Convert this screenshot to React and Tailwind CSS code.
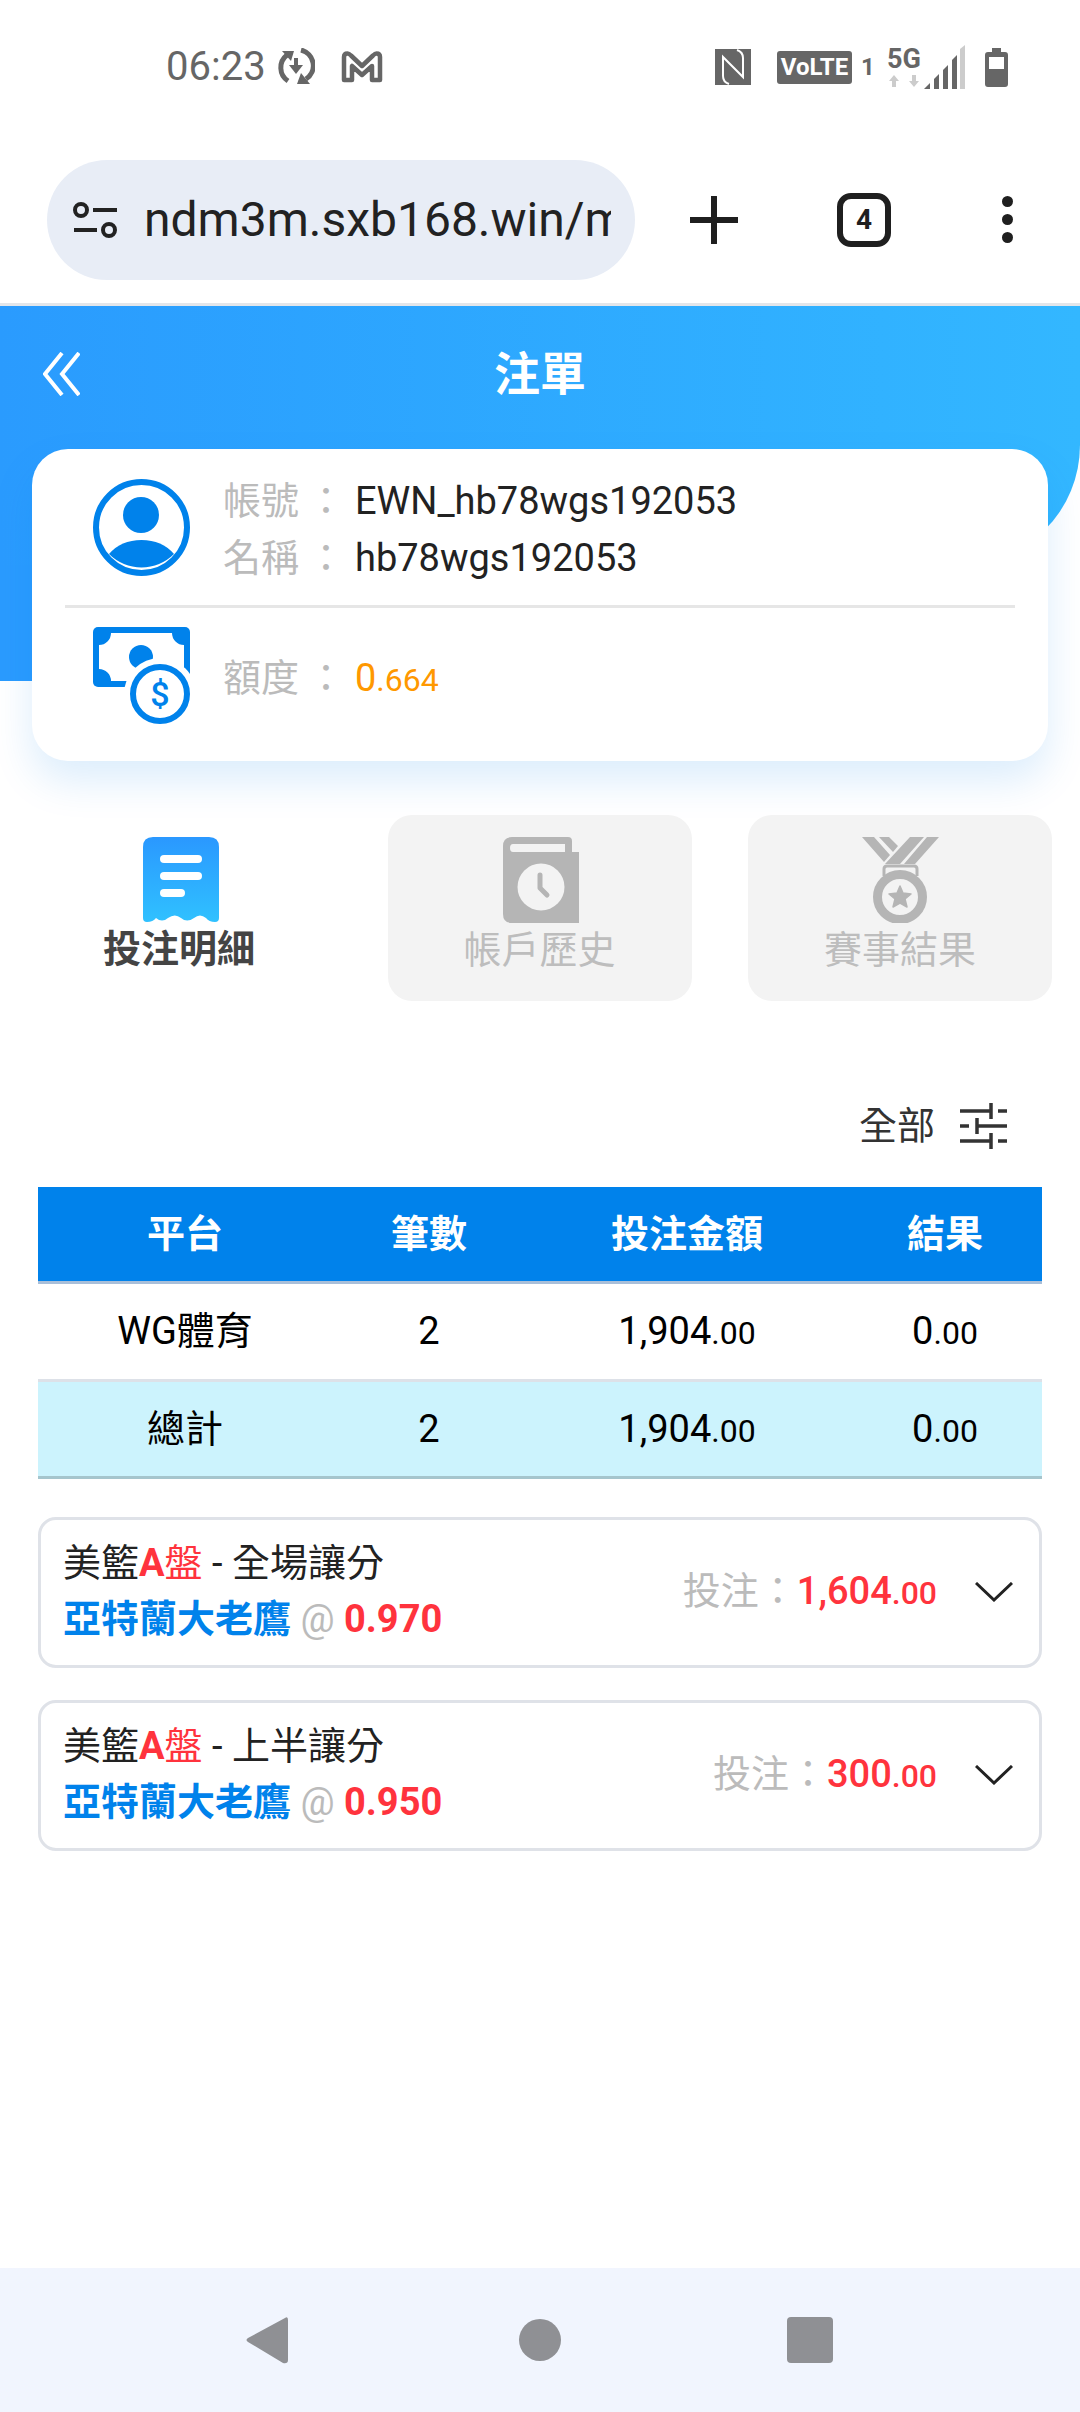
const rows = [
  { name: 'WG體育', count: '2', bet: '1,904', result: '0', cls: 'h-[98px] bg-white border-[#dde1e8]' },
  { name: '總計', count: '2', bet: '1,904', result: '0', cls: 'h-[97px] bg-[#ccf3fd] border-[#a5c5cd]' },
];

const bets = [
  { market: '全場讓分', odds: '0.970', amount: '1,604' },
  { market: '上半讓分', odds: '0.950', amount: '300' },
];

function Money({ value }) {
  return <span>{value}<span className="text-[32px]">.00</span></span>;
}

function SyncIcon() {
  return (
    <svg width="38" height="38" viewBox="0 0 38 38" fill="none" className="ml-[11px]">
      <path d="M10 7 A16 16 0 0 0 11 33" stroke="#666" strokeWidth="5" />
      <path d="M5 3 L17 3 L14 13 Z" fill="#666" />
      <path d="M24 2 A16 16 0 0 1 29 31" stroke="#666" strokeWidth="5" />
      <path d="M33 36 L20 36 L24 25 Z" fill="#666" />
      <path d="M19 10 V19" stroke="#666" strokeWidth="4" />
      <path d="M12 17 H26 L19 26 Z" fill="#666" />
    </svg>
  );
}

function MailIcon() {
  return (
    <svg width="42" height="32" viewBox="0 0 42 32" fill="none" className="ml-[26px]">
      <path d="M3 29 V6 Q3 2.5 6.5 2.5 Q8 2.5 10 4.5 L21 15 L32 4.5 Q34 2.5 35.5 2.5 Q39 2.5 39 6 V29 H31 V15 L21 24 L11 15 V29 Z" stroke="#666" strokeWidth="4.5" strokeLinejoin="round" />
    </svg>
  );
}

function NfcIcon() {
  return (
    <svg width="36" height="36" viewBox="0 0 36 36">
      <rect width="36" height="36" fill="#666" />
      <path d="M14 35 Q8 33 8 27 V8 L27 27 M22 1 Q28 3 28 9 V28 L9 9" stroke="#fff" strokeWidth="2" fill="none" />
    </svg>
  );
}

function ArrowsIcon() {
  return (
    <svg width="30" height="12" viewBox="0 0 30 12" fill="#ccc">
      <path d="M5 0 L10 6 H7 V12 H3 V6 H0 Z" />
      <path d="M25 12 L30 6 H27 V0 H23 V6 H20 Z" />
    </svg>
  );
}

function SignalIcon() {
  return (
    <svg width="41" height="44" viewBox="0 0 41 44" className="ml-1">
      <path d="M0 44 L6 38 V44 Z" fill="#666" />
      <path d="M10 34 L15 29 V44 H10 Z" fill="#666" />
      <path d="M19 25 L24 20 V44 H19 Z" fill="#666" />
      <path d="M28 15 L33 10 V44 H28 Z" fill="#666" />
      <path d="M36 4 L41 0 V44 H36 Z" fill="#ccc" />
    </svg>
  );
}

function BatteryIcon() {
  return (
    <svg width="23" height="39" viewBox="0 0 23 39" className="ml-5">
      <path d="M7 0 H16 V4 H20 Q23 4 23 7 V36 Q23 39 20 39 H3 Q0 39 0 36 V7 Q0 4 3 4 H7 Z" fill="#666" />
      <rect x="4" y="9" width="15" height="12" fill="#fff" />
    </svg>
  );
}

function UserIcon() {
  return (
    <svg width="97" height="97" viewBox="0 0 97 97" className="shrink-0">
      <circle cx="48.5" cy="48.5" r="45.5" fill="none" stroke="#0082eb" strokeWidth="6" />
      <circle cx="48" cy="36" r="18" fill="#0082eb" />
      <path d="M16 75 Q28 61 48.5 61 Q69 61 81 75 A46 46 0 0 1 16 75 Z" fill="#0082eb" />
    </svg>
  );
}

function CashIcon() {
  return (
    <svg width="97" height="97" viewBox="0 0 97 97" className="shrink-0">
      <rect width="97" height="60" rx="5" fill="#0082eb" />
      <path d="M18 6 H79 A12 12 0 0 0 91 18 V42 A12 12 0 0 0 79 54 H18 A12 12 0 0 0 6 42 V18 A12 12 0 0 0 18 6 Z" fill="#fff" />
      <path d="M79 54 H97 V42 L91 42 Z" fill="#0082eb" />
      <circle cx="48" cy="30" r="12" fill="#0082eb" />
      <circle cx="67" cy="67" r="36" fill="#fff" />
      <circle cx="67" cy="67" r="27" fill="#fff" stroke="#0082eb" strokeWidth="6" />
      <text x="67" y="79" textAnchor="middle" fontSize="34" fontWeight="500" fill="#0082eb" fontFamily="Roboto, sans-serif">$</text>
    </svg>
  );
}

function ReceiptIcon() {
  return (
    <svg width="76" height="85" viewBox="0 0 76 85" className="ml-[3px]">
      <defs>
        <linearGradient id="receipt" x1="0" y1="0" x2="0" y2="1">
          <stop offset="0" stopColor="#2a98ff" />
          <stop offset="1" stopColor="#30c1ff" />
        </linearGradient>
      </defs>
      <path d="M10 0 H66 Q76 0 76 10 V81 Q76 85 72 85 Q66 85 63 81 Q57 76 51 81 Q44 86 38 81 Q32 76 25 81 Q19 86 13 81 Q10 85 4 85 Q0 85 0 81 V10 Q0 0 10 0 Z" fill="url(#receipt)" />
      <rect x="17" y="18" width="42" height="8" rx="4" fill="#fff" />
      <rect x="17" y="35" width="42" height="8" rx="4" fill="#fff" />
      <rect x="17" y="52" width="25" height="8" rx="4" fill="#fff" />
    </svg>
  );
}

function BookIcon() {
  return (
    <svg width="76" height="86" viewBox="0 0 76 86" className="ml-[3px]">
      <path d="M9 0 H65 Q69 0 69 4 V15 H76 V86 H9 Q0 86 0 77 V9 Q0 0 9 0 Z" fill="#b5b5b5" />
      <path d="M10 7 H62 V15 H10 Q7 15 7 11 Q7 7 10 7 Z" fill="#f3f3f3" />
      <circle cx="38" cy="50" r="23.5" fill="#f3f3f3" />
      <path d="M37 38 V51 L44 58" fill="none" stroke="#b5b5b5" strokeWidth="5" strokeLinecap="round" strokeLinejoin="round" />
    </svg>
  );
}

function MedalIcon() {
  return (
    <svg width="77" height="86" viewBox="0 0 77 86">
      <path d="M0 0 H12 L28 18 L22 25 Z M17 0 H27 L36 9 L31 15 Z M48 0 H62 L38 27 H23 Z M65 0 H77 L53 27 H42 Z" fill="#b5b5b5" />
      <path d="M22 39 V32 Q22 29 25 29 H52 Q55 29 55 32 V39" fill="none" stroke="#b5b5b5" strokeWidth="3" />
      <circle cx="38" cy="60" r="22.5" fill="#f3f3f3" stroke="#b5b5b5" strokeWidth="9" />
      <path d="M38 49 L41 56 L49 57 L43 62 L45 70 L38 66 L31 70 L33 62 L27 57 L35 56 Z" fill="#b5b5b5" stroke="#b5b5b5" strokeWidth="1.5" strokeLinejoin="round" />
    </svg>
  );
}

function FilterIcon() {
  return (
    <svg width="47" height="46" viewBox="0 0 47 46" fill="none" stroke="#333" strokeWidth="3.5" className="ml-[25px]">
      <path d="M0 8 H31 M38 8 H47 M31 0 V16" />
      <path d="M0 23 H9 M17 23 H47 M17 15 V31" />
      <path d="M0 38 H31 M38 38 H47 M31 30 V46" />
    </svg>
  );
}

const tabs = [
  { label: '投注明細', icon: <ReceiptIcon />, active: true },
  { label: '帳戶歷史', icon: <BookIcon /> },
  { label: '賽事結果', icon: <MedalIcon /> },
];

export default function App() {
  return (
    <div className="w-[1080px] h-[2412px] flex flex-col overflow-hidden bg-white font-['Roboto','Noto_Sans_CJK_TC',sans-serif] text-[38px] text-[#222]">
      {/* Status bar */}
      <div className="h-[136px] pl-[166px] pr-[72px] pb-[2px] flex items-center text-[#666]">
        <span className="text-[40px] leading-none">06:23</span>
        <SyncIcon />
        <MailIcon />
        <div className="ml-auto flex items-center">
          <NfcIcon />
          <span className="ml-[26px] w-[75px] h-[33px] bg-[#666] rounded-[3px] text-white text-[24px] font-bold leading-[33px] text-center">VoLTE</span>
          <span className="ml-[9px] w-[10px] text-[24px] font-bold leading-none">1</span>
          <div className="ml-[17px] w-[32px] flex flex-col items-center gap-[4px]">
            <span className="text-[27px] font-bold leading-[24px]">5G</span>
            <ArrowsIcon />
          </div>
          <SignalIcon />
          <BatteryIcon />
        </div>
      </div>

      {/* Browser bar */}
      <div className="h-[170px] pl-[47px] flex items-center border-b-[3px] border-[#e3e6ea]">
        <div className="w-[588px] h-[120px] rounded-full bg-[#e8edf6] pl-[26px] flex items-center">
          <svg width="45" height="36" viewBox="0 0 45 36" fill="none" stroke="#222" strokeWidth="4" className="shrink-0">
            <circle cx="8" cy="8" r="6" />
            <path d="M20 8 H44 M1 28 H24" />
            <circle cx="36" cy="28" r="6" />
          </svg>
          <div className="ml-[26px] w-[467px] overflow-hidden whitespace-nowrap text-[48px] text-[#222]">ndm3m.sxb168.win/m</div>
        </div>
        <svg width="48" height="48" viewBox="0 0 48 48" className="ml-[55px]">
          <path d="M24 1 V47 M1 24 H47" stroke="#1f1f1f" strokeWidth="6" strokeLinecap="round" />
        </svg>
        <div className="ml-[99px] w-[54px] h-[54px] rounded-[14px] border-[6px] border-[#1f1f1f] flex items-center justify-center text-[28px] font-bold text-[#1f1f1f]">4</div>
        <div className="ml-[111px] flex flex-col gap-[7px]">
          <span className="w-[11px] h-[11px] rounded-full bg-[#1f1f1f]" />
          <span className="w-[11px] h-[11px] rounded-full bg-[#1f1f1f]" />
          <span className="w-[11px] h-[11px] rounded-full bg-[#1f1f1f]" />
        </div>
      </div>

      <div className="relative flex-1 flex flex-col">
        {/* Blue backdrop, the strip is what shows left of the card */}
        <div className="absolute left-0 top-0 w-[40px] h-[375px] bg-[#2a9bfe]" />
        <div className="relative h-[259px] pl-[43px] pr-[494px] pb-[124px] rounded-br-[120px] bg-linear-to-r from-[#2a9bfe] to-[#33b7ff] flex items-center justify-between text-white">
          <svg width="37" height="44" viewBox="0 0 37 44" fill="none" stroke="#fff" strokeWidth="4">
            <path d="M19 1 L2 22 L19 43 M36 1 L19 22 L36 43" />
          </svg>
          <span className="text-[46px] font-bold leading-none">注單</span>
        </div>

        {/* Account card */}
        <div className="relative -mt-[116px] mx-[32px] h-[312px] rounded-[36px] bg-white shadow-[0_20px_40px_rgba(0,130,235,0.14)]">
          <div className="h-[156px] pl-[61px] flex items-center">
            <UserIcon />
            <div className="ml-[33px] mt-[5px] flex flex-col">
              {[['帳號', 'EWN_hb78wgs192053'], ['名稱', 'hb78wgs192053']].map(([label, value]) => (
                <div key={label} className="h-[57px] flex items-center">
                  <span className="w-[76px] text-[#bbb]">{label}</span>
                  <span className="w-[38px] ml-[8px] text-[#bbb]">：</span>
                  <span className="ml-[10px] text-[#222]">{value}</span>
                </div>
              ))}
            </div>
          </div>
          <div className="mx-[33px] h-[3px] bg-[#e6e6e6]" />
          <div className="pl-[61px] pt-[19px] flex">
            <CashIcon />
            <div className="ml-[33px] mt-[23px] h-[57px] flex items-center">
              <span className="w-[76px] text-[#bbb]">額度</span>
              <span className="w-[38px] ml-[8px] text-[#bbb]">：</span>
              <span className="ml-[10px] text-[#ff9800]">0<span className="text-[32px]">.664</span></span>
            </div>
          </div>
        </div>

        {/* Tabs */}
        <div className="relative mt-[54px] pl-[27px] pr-[28px] flex justify-between">
          {tabs.map(t => (
            <div key={t.label} className={`w-[304px] h-[186px] rounded-[24px] pt-[22px] flex flex-col items-center ${t.active ? '' : 'bg-[#f3f3f3]'}`}>
              {t.icon}
              <span className={`mt-[5px] leading-[44px] ${t.active ? 'font-bold text-[#444]' : 'text-[#bdbdbd]'}`}>{t.label}</span>
            </div>
          ))}
        </div>

        {/* Filter */}
        <div className="mt-[102px] pr-[73px] flex items-center justify-end text-[#333]">
          <span className="leading-[46px]">全部</span>
          <FilterIcon />
        </div>

        {/* Summary table */}
        <div className="mt-[38px] mx-[38px]">
          <div className="grid grid-cols-[294px_194px_322px_194px] h-[97px] bg-[#0082eb] border-b-[3px] border-[#a9bfd9] items-center text-center text-white font-bold">
            <span>平台</span><span>筆數</span><span>投注金額</span><span>結果</span>
          </div>
          {rows.map(r => (
            <div key={r.name} className={`grid grid-cols-[294px_194px_322px_194px] border-b-[3px] items-center text-center text-black ${r.cls}`}>
              <span>{r.name}</span>
              <span>{r.count}</span>
              <Money value={r.bet} />
              <Money value={r.result} />
            </div>
          ))}
        </div>

        {/* Bets */}
        <div className="mt-[38px] mx-[38px] flex flex-col gap-[32px]">
          {bets.map(b => (
            <div key={b.market} className="h-[151px] rounded-[18px] border-[3px] border-[#dfe2e8] pl-[22px] pr-[26px] flex items-center">
              <div className="pb-[4px]">
                <div className="leading-[56px] whitespace-pre">
                  美籃<span className="text-[#ff333d] font-bold">A</span><span className="text-[#ff333d]">盤</span> - {b.market}
                </div>
                <div className="leading-[56px] whitespace-pre font-bold text-[#0082eb]">
                  亞特蘭大老鷹 <span className="font-normal text-[#bbb]">@</span> <span className="text-[#ff333d]">{b.odds}</span>
                </div>
              </div>
              <div className="ml-auto pb-[2px] flex items-center">
                <span className="text-[#bbb]">投注：</span>
                <span className="font-medium text-[#ff333d]"><Money value={b.amount} /></span>
                <svg width="38" height="20" viewBox="0 0 38 20" fill="none" stroke="#222" strokeWidth="3" className="ml-[38px]">
                  <path d="M1 1 L19 18 L37 1" />
                </svg>
              </div>
            </div>
          ))}
        </div>

        {/* Android nav */}
        <div className="mt-auto h-[144px] bg-[#f1f5fe] flex items-center">
          <svg width="43" height="48" viewBox="0 0 43 48" className="ml-[245px]">
            <path d="M40 2 L3 22 Q0 24 3 26 L38 47 Q43 48 43 44 V4 Q43 0 40 2 Z" fill="#8f9094" />
          </svg>
          <span className="ml-[231px] w-[42px] h-[42px] rounded-full bg-[#8f9094]" />
          <span className="ml-[226px] w-[46px] h-[46px] rounded-[4px] bg-[#8f9094]" />
        </div>
      </div>
    </div>
  );
}
